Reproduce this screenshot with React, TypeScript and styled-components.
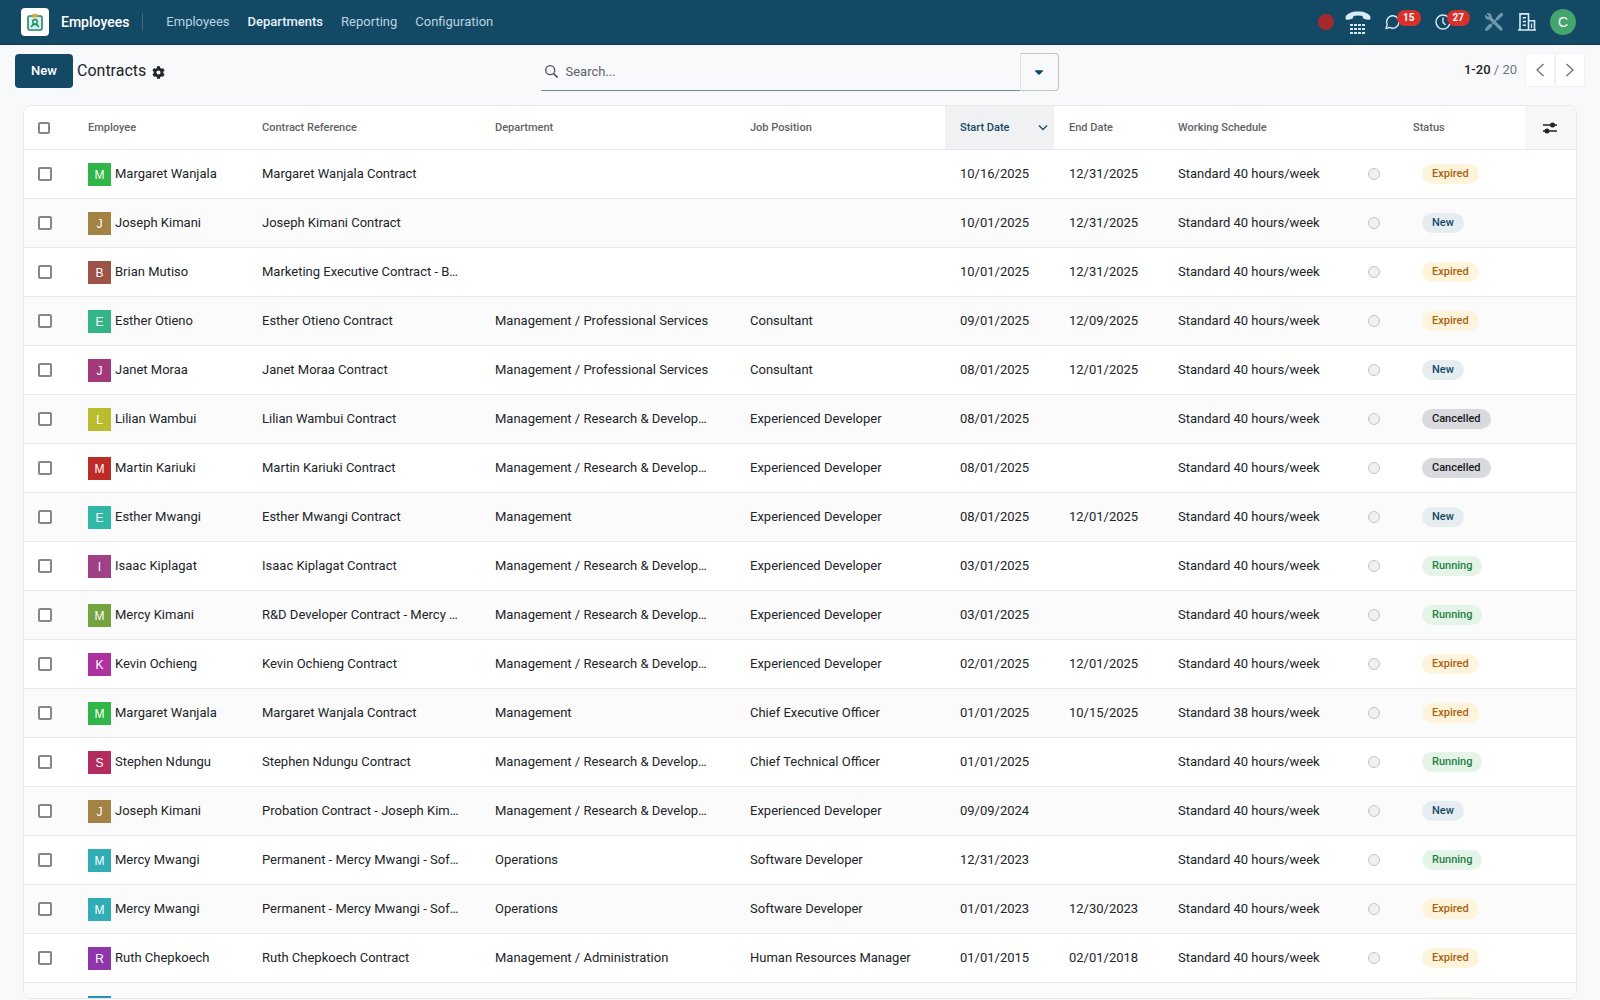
import React from "react";
import styled, { createGlobalStyle } from "styled-components";
import { FaCog, FaCaretDown } from "react-icons/fa";

const GlobalStyle = createGlobalStyle`
  * { box-sizing: border-box; }
  body {
    margin: 0;
    background: #f7f9fb;
    color: #212529;
    font-family: Roboto, "Liberation Sans", sans-serif;
    font-size: 13px;
    line-height: 20px;
  }
  button, input { font: inherit; color: inherit; }
  button { padding: 0; border: 0; background: none; cursor: pointer; }
  a { color: inherit; text-decoration: none; }
`;

const Page = styled.div`
  display: flex;
  flex-direction: column;
  height: 100vh;
  padding-bottom: 1px;
`;

const NavBar = styled.header`
  display: flex;
  flex: none;
  align-items: center;
  height: 45px;
  padding: 0 24px 0 21px;
  background: #144965;
  border-bottom: 1px solid #0f3b53;
  color: #c4dcea;
`;

const Logo = styled.a`
  display: grid;
  place-items: center;
  width: 28px;
  height: 28px;
  border-radius: 4px;
  background: #fff;
`;

const Brand = styled.a`
  margin-left: 12px;
  padding-right: 13px;
  border-right: 1px solid #3f6a82;
  color: #fff;
  font-size: 14px;
  font-weight: 500;
  line-height: 18px;
`;

const Menu = styled.nav`
  display: flex;
  gap: 18px;
  margin-left: 23px;
`;

const MenuLink = styled.a<{ $active?: boolean }>`
  font-weight: ${(p) => (p.$active ? 500 : 400)};
  color: ${(p) => (p.$active ? "#e3f2fb" : "#b9d3e2")};
`;

const Tray = styled.div`
  display: flex;
  align-items: center;
  gap: 14px;
  margin-left: auto;
`;

const TrayButton = styled.button<{ $faded?: boolean }>`
  display: flex;
  align-items: center;
  color: ${(p) => (p.$faded ? "#6f97ae" : "#d6ebf7")};
`;

const RecordDot = styled.span`
  width: 16px;
  height: 16px;
  margin-right: -3px;
  border-radius: 50%;
  background: #a32b2e;
`;

const Count = styled.span`
  height: 16px;
  margin: -9px 0 0 -4px;
  padding: 0 6px;
  border-radius: 8px;
  background: #d9302c;
  color: #fff;
  font-size: 10px;
  font-weight: 700;
  line-height: 15px;
`;

const UserButton = styled.button`
  width: 26px;
  height: 26px;
  border-radius: 50%;
  background: #45a56d;
  color: #fff;
  font-family: "Liberation Sans", sans-serif;
  font-size: 14px;
`;

const ControlPanel = styled.div`
  display: grid;
  grid-template-columns: 1fr 518px 1fr;
  flex: none;
  height: 60px;
  padding: 8px 16px 0 15px;
`;

const Breadcrumb = styled.div`
  display: flex;
  align-items: center;
  gap: 4px;
  height: 36px;
`;

const NewButton = styled.button`
  width: 58px;
  height: 34px;
  border-radius: 4px;
  background: #144965;
  color: #fff;
  font-weight: 500;
`;

const Title = styled.h1`
  margin: 0;
  font-size: 16px;
  font-weight: 400;
`;

const GearButton = styled.button`
  display: flex;
  padding: 2px 2px 0;
`;

const Search = styled.div`
  display: flex;
  height: 38px;
`;

const SearchBox = styled.label`
  display: flex;
  flex: 1;
  align-items: center;
  gap: 8px;
  padding: 0 4px;
  border-bottom: 1px solid #6e8b9b;
  color: #495057;
`;

const SearchInput = styled.input`
  flex: 1;
  padding: 0;
  border: 0;
  outline: 0;
  background: transparent;
  &::placeholder { color: #5f6368; opacity: 1; }
`;

const SearchToggle = styled.button`
  display: grid;
  place-items: center;
  width: 39px;
  border: 1px solid #bcc6cd;
  border-left-color: #dfe3e6;
  border-radius: 0 4px 4px 0;
  color: #144965;
`;

const Pager = styled.div`
  display: flex;
  justify-content: flex-end;
  align-items: center;
  height: 33px;
  gap: 2px;
  color: #6c757d;
`;

const PagerText = styled.span`
  margin-right: 7px;
  line-height: 16px;
  b { color: #212529; font-weight: 500; }
`;

const PagerButton = styled.button`
  display: grid;
  place-items: center;
  width: 28px;
  height: 32px;
  background: #fff;
  box-shadow: 0 0 2px #e2e6e9;
  color: #6c6f73;
`;

const Card = styled.main`
  flex: 1;
  min-height: 0;
  margin: 0 23px;
  overflow: hidden;
  border: 1px solid #e6e9eb;
  border-radius: 8px;
  background: #fff;
`;

const Table = styled.table`
  width: 100%;
  table-layout: fixed;
  border-collapse: separate;
  border-spacing: 0;
`;

const HeadCell = styled.th<{ $sorted?: boolean; $tinted?: boolean }>`
  height: 44px;
  padding: 0 ${(p) => (p.$tinted ? 18 : 15)}px;
  border-bottom: 1px solid #e6e8ea;
  background: ${(p) => (p.$sorted ? "#eff1f3" : p.$tinted ? "#f5f7f9" : "#fff")};
  color: ${(p) => (p.$sorted ? "#144965" : "#5f6368")};
  font-size: 11px;
  font-weight: 500;
  text-align: left;
  white-space: nowrap;
  &:first-child { padding-left: 14px; }
`;

const SortLabel = styled.span`
  display: flex;
  justify-content: space-between;
  align-items: center;
  margin-right: -9px;
`;

const Row = styled.tr`
  &:nth-child(even) { background: #fbfbfb; }
`;

const Cell = styled.td`
  height: 49px;
  padding: 0 20px 0 15px;
  border-bottom: 1px solid #e9eaeb;
  overflow: hidden;
  text-overflow: ellipsis;
  white-space: nowrap;
  &:first-child { padding-left: 14px; }
`;

const Check = styled.input.attrs({ type: "checkbox" })<{ $small?: boolean }>`
  display: block;
  appearance: none;
  width: ${(p) => (p.$small ? 12 : 14)}px;
  height: ${(p) => (p.$small ? 12 : 14)}px;
  margin: 0;
  border: 2px solid #85878a;
  border-radius: 2px;
  background: #fff;
`;

const Person = styled.div`
  display: flex;
  gap: 4px;
  height: 23px;
  line-height: 22px;
`;

const Avatar = styled.span<{ $color: string }>`
  width: 23px;
  height: 23px;
  background: ${(p) => p.$color};
  color: #fff;
  font-family: "Liberation Sans", sans-serif;
  font-size: 12px;
  line-height: 24px;
  text-align: center;
`;

const ActivityButton = styled.button`
  display: block;
  width: 12px;
  height: 12px;
  border: 1px solid #c3c5c7;
  border-radius: 50%;
  background: #f0f0f0;
`;

type Status = "Expired" | "New" | "Cancelled" | "Running";

const statusColors: Record<Status, [string, string]> = {
  Expired: ["#fdf4db", "#a86210"],
  New: ["#e6edf1", "#144965"],
  Cancelled: ["#d9dadd", "#17191b"],
  Running: ["#e4f4e9", "#24803d"],
};

const Badge = styled.span<{ $status: Status }>`
  display: block;
  width: fit-content;
  margin-left: 9px;
  padding: 0 10px;
  border-radius: 10px;
  background: ${(p) => statusColors[p.$status][0]};
  color: ${(p) => statusColors[p.$status][1]};
  font-size: 11px;
  font-weight: 500;
  line-height: 20px;
`;

type Contract = [string, string, string, string, string, string, string, string, Status];

const RD = "Management / Research & Development";
const PS = "Management / Professional Services";
const H40 = "Standard 40 hours/week";
const DEV = "Experienced Developer";

const contracts: Contract[] = [
  ["Margaret Wanjala", "#30b548", "Margaret Wanjala Contract", "", "", "10/16/2025", "12/31/2025", H40, "Expired"],
  ["Joseph Kimani", "#a38244", "Joseph Kimani Contract", "", "", "10/01/2025", "12/31/2025", H40, "New"],
  ["Brian Mutiso", "#9d5346", "Marketing Executive Contract - Brian Mutiso", "", "", "10/01/2025", "12/31/2025", H40, "Expired"],
  ["Esther Otieno", "#33b589", "Esther Otieno Contract", PS, "Consultant", "09/01/2025", "12/09/2025", H40, "Expired"],
  ["Janet Moraa", "#a3397b", "Janet Moraa Contract", PS, "Consultant", "08/01/2025", "12/01/2025", H40, "New"],
  ["Lilian Wambui", "#b9bc2d", "Lilian Wambui Contract", RD, DEV, "08/01/2025", "", H40, "Cancelled"],
  ["Martin Kariuki", "#bf2b26", "Martin Kariuki Contract", RD, DEV, "08/01/2025", "", H40, "Cancelled"],
  ["Esther Mwangi", "#2fb8a7", "Esther Mwangi Contract", "Management", DEV, "08/01/2025", "12/01/2025", H40, "New"],
  ["Isaac Kiplagat", "#a04186", "Isaac Kiplagat Contract", RD, DEV, "03/01/2025", "", H40, "Running"],
  ["Mercy Kimani", "#74a340", "R&D Developer Contract - Mercy Kimani", RD, DEV, "03/01/2025", "", H40, "Running"],
  ["Kevin Ochieng", "#ad329f", "Kevin Ochieng Contract", RD, DEV, "02/01/2025", "12/01/2025", H40, "Expired"],
  ["Margaret Wanjala", "#30b548", "Margaret Wanjala Contract", "Management", "Chief Executive Officer", "01/01/2025", "10/15/2025", "Standard 38 hours/week", "Expired"],
  ["Stephen Ndungu", "#b32c5d", "Stephen Ndungu Contract", RD, "Chief Technical Officer", "01/01/2025", "", H40, "Running"],
  ["Joseph Kimani", "#a38244", "Probation Contract - Joseph Kimani", RD, DEV, "09/09/2024", "", H40, "New"],
  ["Mercy Mwangi", "#31adb5", "Permanent - Mercy Mwangi - Software Developer", "Operations", "Software Developer", "12/31/2023", "", H40, "Running"],
  ["Mercy Mwangi", "#31adb5", "Permanent - Mercy Mwangi - Software Developer", "Operations", "Software Developer", "01/01/2023", "12/30/2023", H40, "Expired"],
  ["Ruth Chepkoech", "#9036ab", "Ruth Chepkoech Contract", "Management / Administration", "Human Resources Manager", "01/01/2015", "02/01/2018", H40, "Expired"],
  ["", "#2b92b8", "", "", "", "", "", "", "Expired"],
];

const columnWidths = [49, 174, 233, 255, 210, 109, 109, 190, 45, 127, 51];

const EmployeesLogo = () => (
  <svg width="18" height="20" viewBox="0 0 18 20" fill="none">
    <rect x="2" y="4" width="14" height="14" rx="1.5" fill="#d6f1e9" stroke="#22856b" strokeWidth="1.6" />
    <rect x="6.5" y="2" width="5" height="3.6" rx="0.6" fill="#e5a63c" />
    <circle cx="9" cy="9.8" r="2.3" stroke="#22856b" strokeWidth="1.4" />
    <path d="M5.2 15.2 C6 12.9 7.3 12.2 9 12.2 C10.700 12.2 12 12.9 12.800 15.2" stroke="#22856b" strokeWidth="1.4" />
  </svg>
);

const PhoneIcon = () => (
  <svg width="26" height="23" viewBox="0 0 26 23" fill="currentColor">
    <path d="M0.500 6 C1.500 2.500 7 0.500 13 0.500 S24.500 2.500 25.500 6 C25.800 8.500 24.500 9.200 22.500 8.700 L19.500 7.900 C17.800 7.400 17.700 6.500 17.500 5 C15 4.300 11 4.300 8.500 5 C8.300 6.500 8.200 7.400 6.500 7.900 L3.500 8.700 C1.500 9.200 0.200 8.500 0.500 6 Z" />
    {[13, 17, 21].map((y) =>
      [5, 9, 13, 17].map((x) => <rect key={`${x}-${y}`} x={x} y={y} width="3" height="2" rx="0.3" />)
    )}
  </svg>
);

const ChatIcon = () => (
  <svg width="16" height="16" viewBox="0 0 16 16" fill="none" stroke="currentColor" strokeWidth="1.4" strokeLinejoin="round">
    <path d="M1 14.600 L2.200 10.700 A6.200 6.200 0 1 1 4.800 13.400 Z" />
  </svg>
);

const ClockIcon = () => (
  <svg width="16" height="16" viewBox="0 0 16 16" fill="none" stroke="currentColor" strokeWidth="1.4" strokeLinecap="round">
    <circle cx="8" cy="8" r="7" />
    <path d="M8 4 V8.500 L10.200 10.500" />
  </svg>
);

const ToolsIcon = () => (
  <svg width="20" height="20" viewBox="0 0 20 20" fill="none" stroke="currentColor" strokeLinecap="round">
    <path d="M7 7 L17 17" strokeWidth="3.200" />
    <path d="M2.400 1.300 L5 3.900 L4 5 L1.300 2.400 C0.500 4.600 1.500 7.300 4.500 7.800 L7.600 8 L8 5 C7.800 2 5 0.400 2.400 1.300 Z" fill="currentColor" stroke="none" />
    <path d="M17.500 2.500 L13.300 6.700" strokeWidth="3.200" />
    <path d="M12.500 7.500 L7 13" strokeWidth="1.400" />
    <path d="M5.800 11.500 L8.500 14.200 L3.500 18.800 L1.200 18.800 L1.200 16.500 Z" fill="currentColor" stroke="none" />
  </svg>
);

const CompanyIcon = () => (
  <svg width="18" height="18" viewBox="0 0 18 18" fill="none" stroke="currentColor" strokeWidth="1.600">
    <path d="M0 17 H18 M2 17 V0.900 H10.500 V17 M10.500 7.800 H16.500 V17" />
    <path d="M4.700 4.700 H8 M4.700 8.500 H8 M4.700 12.300 H8" />
    <path d="M13.500 10.500 V15" strokeWidth="1.200" />
  </svg>
);

const SearchIcon = () => (
  <svg width="13" height="13" viewBox="0 0 13 13" fill="none" stroke="currentColor" strokeWidth="1.300">
    <circle cx="5.200" cy="5.200" r="4.500" />
    <path d="M8.500 8.500 L12.500 12.500" strokeWidth="1.600" />
  </svg>
);

const Chevron = ({ points, width, height }: { points: string; width: number; height: number }) => (
  <svg width={width} height={height} viewBox={`0 0 ${width} ${height}`} fill="none" stroke="currentColor" strokeWidth="1.300">
    <polyline points={points} />
  </svg>
);

const SlidersIcon = () => (
  <svg width="14" height="12" viewBox="0 0 14 12" fill="#212529" stroke="#212529" strokeWidth="1.400">
    <path d="M0 3 H14 M0 9 H14" />
    <circle cx="9.500" cy="3" r="1.800" />
    <circle cx="4" cy="9" r="1.800" />
  </svg>
);

export default function App() {
  return (
    <Page>
      <GlobalStyle />
      <NavBar>
        <Logo href="#" aria-label="Home"><EmployeesLogo /></Logo>
        <Brand href="#">Employees</Brand>
        <Menu>
          <MenuLink href="#">Employees</MenuLink>
          <MenuLink href="#" $active>Departments</MenuLink>
          <MenuLink href="#">Reporting</MenuLink>
          <MenuLink href="#">Configuration</MenuLink>
        </Menu>
        <Tray>
          <RecordDot />
          <TrayButton aria-label="Phone"><PhoneIcon /></TrayButton>
          <TrayButton aria-label="Messages"><ChatIcon /><Count>15</Count></TrayButton>
          <TrayButton aria-label="Activities"><ClockIcon /><Count>27</Count></TrayButton>
          <TrayButton aria-label="Tools" $faded><ToolsIcon /></TrayButton>
          <TrayButton aria-label="Company"><CompanyIcon /></TrayButton>
          <UserButton>C</UserButton>
        </Tray>
      </NavBar>

      <ControlPanel>
        <Breadcrumb>
          <NewButton>New</NewButton>
          <Title>Contracts</Title>
          <GearButton aria-label="Actions"><FaCog size={13} /></GearButton>
        </Breadcrumb>
        <Search>
          <SearchBox>
            <SearchIcon />
            <SearchInput type="text" placeholder="Search..." aria-label="Search" />
          </SearchBox>
          <SearchToggle aria-label="Toggle search panel"><FaCaretDown size={14} /></SearchToggle>
        </Search>
        <Pager>
          <PagerText><b>1-20</b> / 20</PagerText>
          <PagerButton aria-label="Previous"><Chevron width={8} height={14} points="7.500,1 1,7 7.500,13" /></PagerButton>
          <PagerButton aria-label="Next"><Chevron width={8} height={14} points="0.500,1 7,7 0.500,13" /></PagerButton>
        </Pager>
      </ControlPanel>

      <Card>
        <Table>
          <colgroup>
            {columnWidths.map((width, i) => <col key={i} width={width} />)}
          </colgroup>
          <thead>
            <tr>
              <HeadCell><Check $small aria-label="Select all" /></HeadCell>
              <HeadCell>Employee</HeadCell>
              <HeadCell>Contract Reference</HeadCell>
              <HeadCell>Department</HeadCell>
              <HeadCell>Job Position</HeadCell>
              <HeadCell $sorted aria-sort="descending">
                <SortLabel>Start Date<Chevron width={10} height={8} points="1,1.500 5,5.500 9,1.500" /></SortLabel>
              </HeadCell>
              <HeadCell>End Date</HeadCell>
              <HeadCell>Working Schedule</HeadCell>
              <HeadCell />
              <HeadCell>Status</HeadCell>
              <HeadCell $tinted>
                <TrayButton aria-label="Optional columns"><SlidersIcon /></TrayButton>
              </HeadCell>
            </tr>
          </thead>
          <tbody>
            {contracts.map(([name, color, reference, department, job, start, end, schedule, status], i) => (
              <Row key={i}>
                <Cell><Check aria-label={`Select row ${i + 1}`} /></Cell>
                <Cell>
                  <Person><Avatar $color={color}>{name[0]}</Avatar>{name}</Person>
                </Cell>
                <Cell>{reference}</Cell>
                <Cell>{department}</Cell>
                <Cell>{job}</Cell>
                <Cell>{start}</Cell>
                <Cell>{end}</Cell>
                <Cell>{schedule}</Cell>
                <Cell><ActivityButton aria-label="Activities" /></Cell>
                <Cell><Badge $status={status}>{status}</Badge></Cell>
                <Cell />
              </Row>
            ))}
          </tbody>
        </Table>
      </Card>
    </Page>
  );
}
